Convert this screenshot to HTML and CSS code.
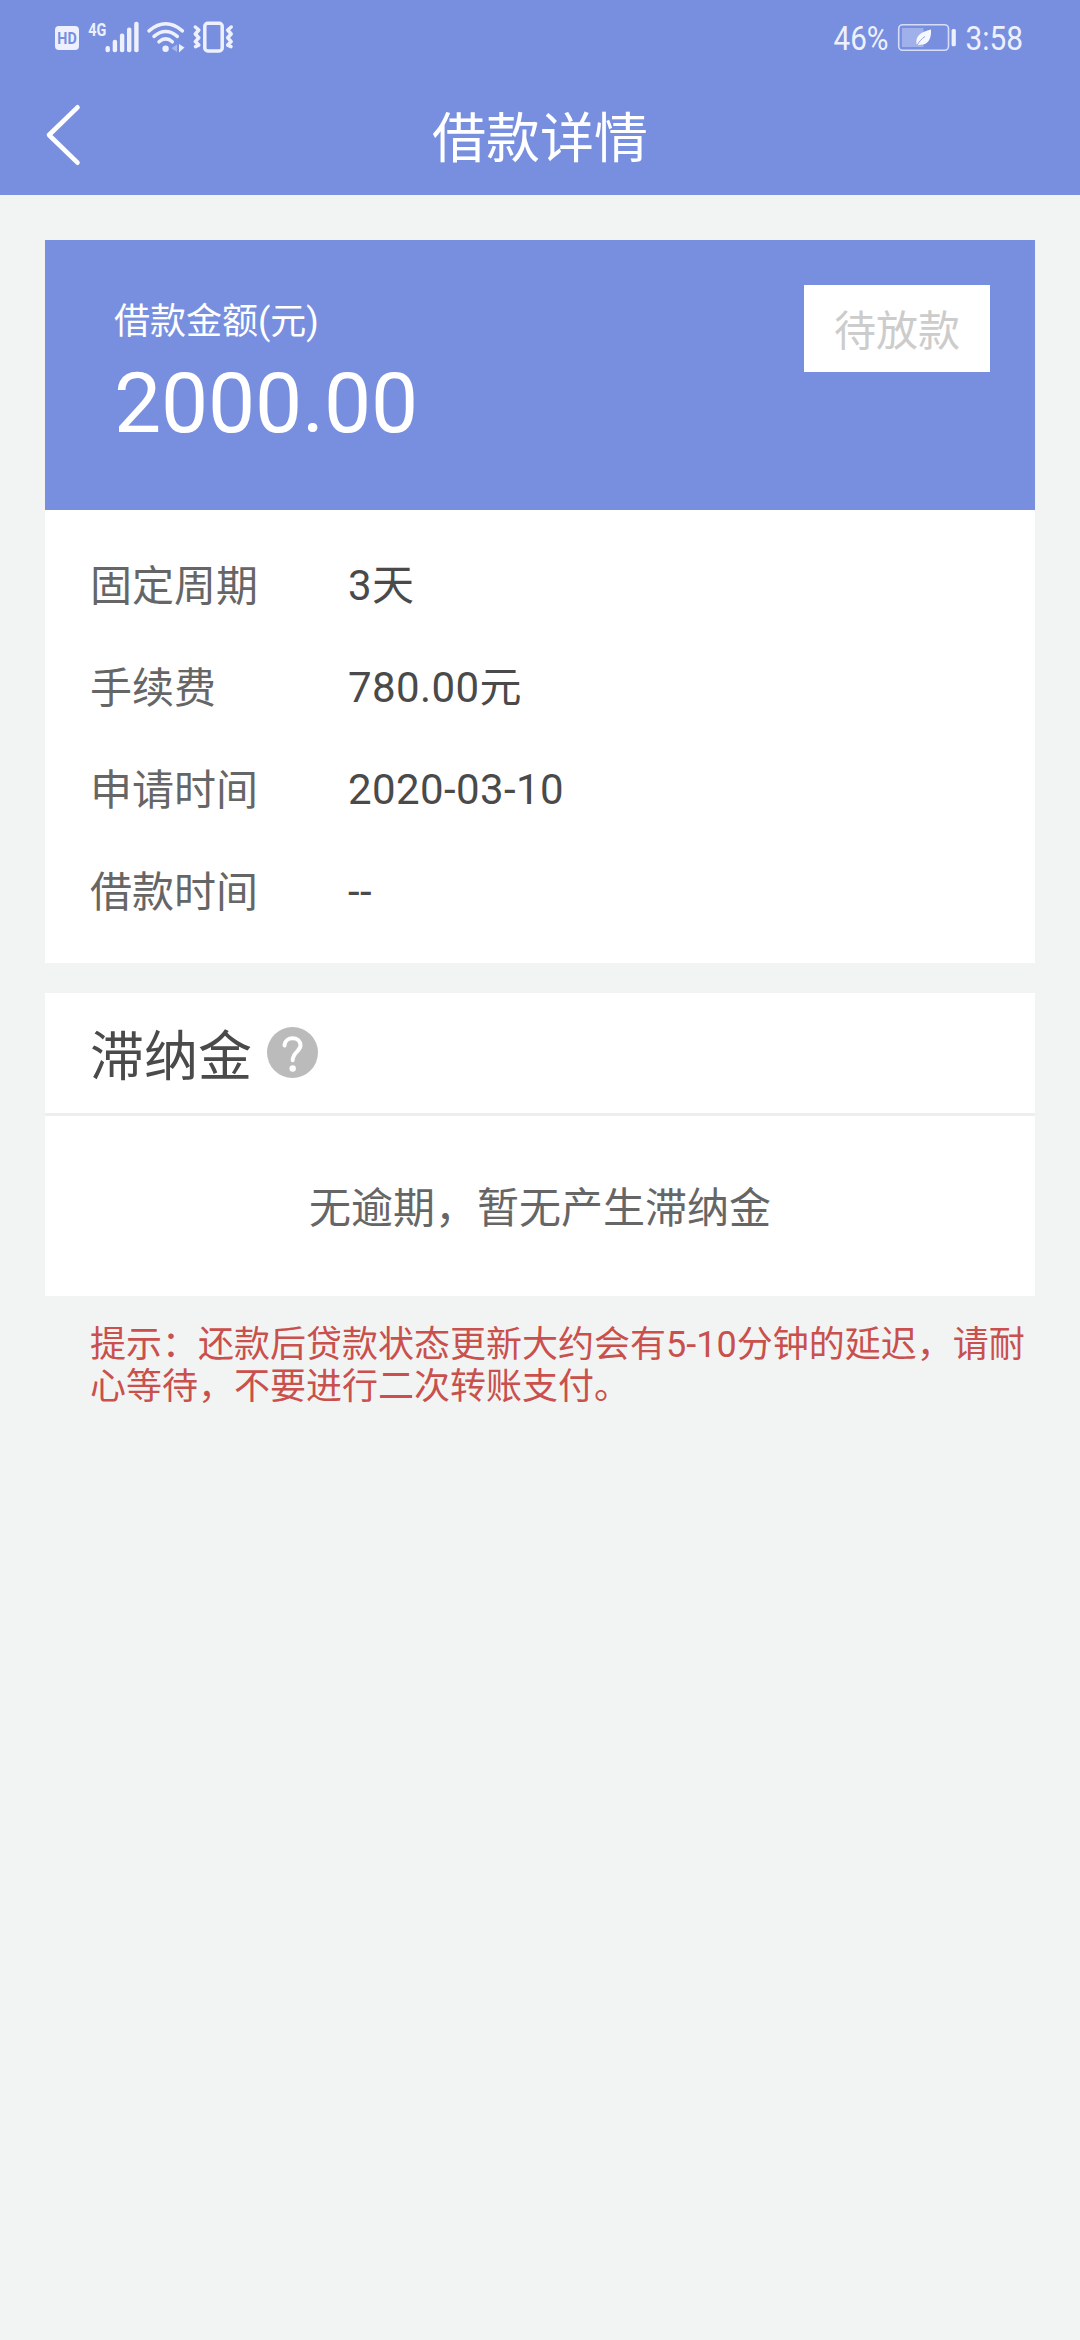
FILE: index.html
```html
<!DOCTYPE html>
<html lang="zh-CN">
<head>
<meta charset="utf-8">
<title>借款详情</title>
<link rel="stylesheet" href="styles.css">
</head>
<body>
<header class="header">
  <div class="status-bar">
    <svg class="status-left" viewBox="40 10 210 60" aria-hidden="true">
      <rect x="55" y="26" width="24" height="24" rx="4" fill="#eef1fd"/>
      <text class="status-hd" x="57.3" y="43.8" textLength="19.4" lengthAdjust="spacingAndGlyphs">HD</text>
      <text class="status-net" x="88.3" y="35.8" textLength="18" lengthAdjust="spacingAndGlyphs">4G</text>
      <g fill="#eef1fd">
        <rect x="105.5" y="46" width="4.4" height="6.3" rx="2"/>
        <rect x="112.7" y="39.7" width="4.4" height="12.6" rx="2"/>
        <rect x="119.9" y="33.5" width="4.4" height="18.8" rx="2"/>
        <rect x="127" y="27.5" width="4.4" height="24.8" rx="2"/>
        <rect x="134.2" y="21.7" width="4.4" height="30.6" rx="2"/>
        <circle cx="165.6" cy="48.7" r="3.2"/>
        <path d="M179 44l5.500 3.500-5.500 5z"/>
        <path d="M177 44.5v7.5l-5.5-3.7z" opacity=".4"/>
      </g>
      <g fill="none" stroke="#eef1fd" stroke-width="3.5" stroke-linecap="round" stroke-linejoin="round">
        <path d="M149 30.8Q165.7 16.8 182.4 30.8"/>
        <path d="M154 36.3Q165.7 26.6 177.3 36.3"/>
        <path d="M159 41.8Q165.7 36 172.3 41.8"/>
        <rect x="204.8" y="23.3" width="17.4" height="27.6" rx="3"/>
        <path d="M195.3 27l3.5 3-3.5 4 3.5 3.8-3.5 3.8 3.5 3.500-3.300 1.500"/>
        <path d="M231.2 27l-3.5 3 3.5 4-3.5 3.8 3.5 3.8-3.5 3.500 3.300 1.500"/>
      </g>
    </svg>
    <svg class="status-right" viewBox="820 10 220 60" aria-hidden="true">
      <text class="status-text" x="833.5" y="50" textLength="55" lengthAdjust="spacingAndGlyphs">46%</text>
      <rect x="898.7" y="24.7" width="49.8" height="25.6" rx="4" fill="none" stroke="#d5ddf8" stroke-width="1.6"/>
      <rect x="902" y="28" width="21.5" height="19" fill="#a0b0eb"/>
      <path d="M931 29.5c.5 9-2.500 15.500-11 15.300l-2.800.5-.7-1.200c-1-8 4-12.300 14.500-14.600z" fill="#f6f8ff"/>
      <path d="M917 45.500c2-4 4.500-6.500 8-9" fill="none" stroke="#8fa2e6" stroke-width="1"/>
      <rect x="951.6" y="29" width="4.200" height="17.200" rx="1.500" fill="#eef1fd"/>
      <text class="status-text" x="965.500" y="50" textLength="57.500" lengthAdjust="spacingAndGlyphs">3:58</text>
    </svg>
  </div>
  <nav class="nav-bar">
    <svg class="back" viewBox="0 0 40 64" aria-label="返回"><path d="M33.500 4.300L5 32 33.500 59.700"/></svg>
    <h1 class="nav-title">借款详情</h1>
  </nav>
</header>
<main class="page">
  <section class="loan">
    <div class="loan-head">
      <div class="loan-sum">
        <div class="loan-label">借款金额(元)</div>
        <div class="loan-amount">2000.00</div>
      </div>
      <div class="loan-state">待放款</div>
    </div>
    <dl class="details">
      <dt>固定周期</dt><dd>3天</dd>
      <dt>手续费</dt><dd>780.00元</dd>
      <dt>申请时间</dt><dd>2020-03-10</dd>
      <dt>借款时间</dt><dd>--</dd>
    </dl>
  </section>
  <section class="late-fee">
    <div class="late-head">
      <h2 class="late-title">滞纳金</h2>
      <svg class="help" viewBox="0 0 51 51" aria-hidden="true">
        <circle cx="25.500" cy="25.500" r="25.500" fill="#bbb"/>
        <path d="M17.500 18.500C18.200 8.500 33.300 9 33.500 18.300C33.500 24.500 25.700 25 25.700 33.300" fill="none" stroke="#fff" stroke-width="4" stroke-linecap="round"/>
        <circle cx="25.700" cy="41.500" r="3.200" fill="#fff"/>
      </svg>
    </div>
    <p class="late-empty">无逾期，暂无产生滞纳金</p>
  </section>
  <p class="notice">提示：还款后贷款状态更新大约会有5-10分钟的延迟，请耐心等待，不要进行二次转账支付。</p>
</main>
</body>
</html>
```
FILE: styles.css
```css
* { box-sizing: border-box; margin: 0; padding: 0; }

body {
  min-height: 2340px;
  background: #f2f4f4;
  color: #4a4a4a;
  font-family: Roboto, "Noto Sans CJK SC", sans-serif;
  font-size: 42px;
}

.header { height: 195px; background: #788fe0; color: #fff; }

.status-bar {
  display: flex;
  justify-content: space-between;
  height: 81px;
  padding: 10px 40px 11px;
}
.status-left { width: 210px; height: 60px; }
.status-right { width: 220px; height: 60px; }
.status-text { font-size: 34px; fill: #eef1fd; }
.status-hd { font-size: 16px; font-weight: 700; fill: #788fe0; }
.status-net { font-size: 19px; font-weight: 700; fill: #eef1fd; }

.nav-bar {
  display: grid;
  grid-template-columns: 40px 1fr 40px;
  align-items: start;
  padding: 22px 44px 0;
}
.back { width: 40px; height: 64px; fill: none; stroke: #fff; stroke-width: 4.6; stroke-linecap: round; stroke-linejoin: round; }
.nav-title { padding-top: 4px; font-size: 54px; font-weight: 400; line-height: 66px; text-align: center; }

.page { padding: 45px 45px 0; }

.loan-head {
  display: flex;
  justify-content: space-between;
  align-items: flex-start;
  height: 270px;
  padding: 45px 45px 0 69px;
  background: #788fe0;
  color: #fff;
}
.loan-sum { padding-top: 16px; }
.loan-label { font-size: 36px; line-height: 42px; }
.loan-amount { font-size: 84px; line-height: 122px; letter-spacing: -0.2px; }
.loan-state {
  width: 186px;
  height: 87px;
  padding-top: 3px;
  background: #fff;
  color: #ccc;
  line-height: 87px;
  text-align: center;
}

.details {
  display: grid;
  grid-template-columns: 258px 1fr;
  grid-auto-rows: 102px;
  height: 453px;
  padding: 26px 45px 0;
  background: #fff;
  line-height: 102px;
}
.details dt { color: #666; }
.details dd { line-height: 100px; letter-spacing: 0.4px; }

.late-fee { height: 303px; margin-top: 30px; background: #fff; }
.late-head {
  display: flex;
  align-items: flex-start;
  gap: 15px;
  height: 123px;
  padding: 34px 45px 0;
  border-bottom: 3px solid #eee;
}
.late-title { font-size: 54px; font-weight: 400; line-height: 62px; }
.help { width: 51px; height: 51px; }
.late-empty { padding-top: 63px; color: #666; line-height: 60px; text-align: center; }

.notice { padding: 28px 0 0 45px; color: #c9504c; font-size: 36px; line-height: 42px; }
```
